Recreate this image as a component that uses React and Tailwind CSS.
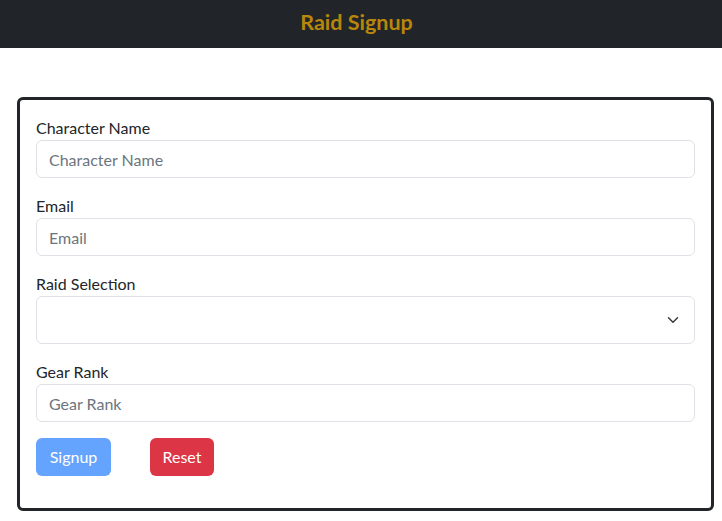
import React from "react";

const Field = ({ label, placeholder }) => (
  <div className="mb-4 flex flex-col">
    <label className="leading-6">{label}</label>
    <input
      type="text"
      placeholder={placeholder}
      className="h-[38px] w-full rounded-md border border-[#dee2e6] bg-white px-3 text-base text-[#212529] placeholder:text-[#6c757d] outline-none"
    />
  </div>
);

const App = () => {
  return (
    <div
      className="min-h-screen bg-white text-base text-[#212529]"
      style={{ fontFamily: "Lato, 'Open Sans', sans-serif" }}
    >
      {/* Header */}
      <header className="flex h-12 items-center justify-center bg-[#212529] pb-1 pr-[9px]">
        <h1 className="text-[21.5px] font-bold text-[#b8860b]">Raid Signup</h1>
      </header>

      {/* Form card */}
      <div className="mt-[49px] ml-[17px] mr-[8px] rounded-md border-[3px] border-[#212529] p-4">
        <Field label="Character Name" placeholder="Character Name" />
        <Field label="Email" placeholder="Email" />

        <div className="mb-4 flex flex-col">
          <label className="leading-6">Raid Selection</label>
          <div className="relative">
            <select className="h-12 w-full appearance-none rounded-md border border-[#dee2e6] bg-white px-4 text-lg outline-none">
              <option value=""></option>
            </select>
            <svg
              className="pointer-events-none absolute right-[14px] top-[18px] h-3 w-4"
              viewBox="0 0 16 16"
              fill="none"
              stroke="#343a40"
              strokeWidth="2"
              strokeLinecap="round"
              strokeLinejoin="round"
            >
              <path d="m2 5 6 6 6-6" />
            </svg>
          </div>
        </div>

        <Field label="Gear Rank" placeholder="Gear Rank" />

        <div className="mb-4 flex gap-[39px]">
          <button className="h-[38px] w-[75px] rounded-md bg-[#64a3fe] text-white">
            Signup
          </button>
          <button className="h-[38px] w-[64px] rounded-md bg-[#dc3545] text-white">
            Reset
          </button>
        </div>
      </div>
    </div>
  );
};

export default App;
